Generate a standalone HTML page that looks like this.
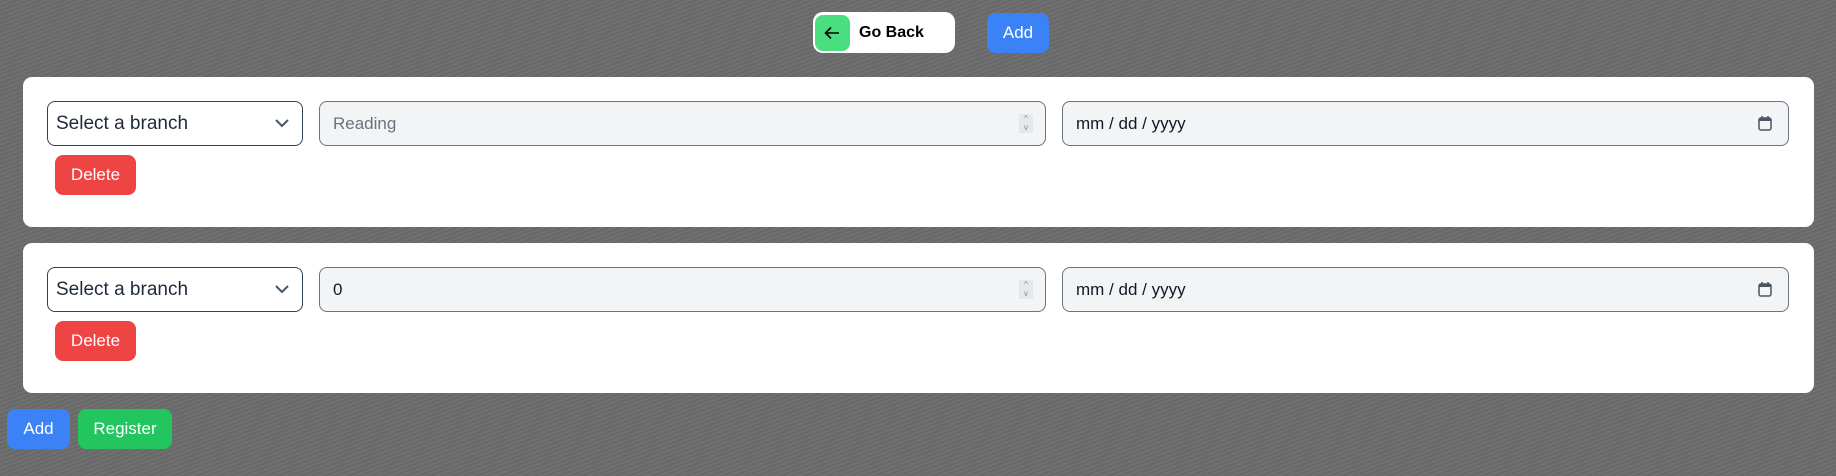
<!DOCTYPE html>
<html><head><style>
*{box-sizing:border-box;margin:0;padding:0}
body{width:1836px;height:476px;overflow:hidden;font-family:"Liberation Sans",sans-serif;
background:#6c6c6c;
background-image:repeating-linear-gradient(160deg,rgba(255,255,255,.035) 0 1px,rgba(0,0,0,.04) 1px 3px,rgba(255,255,255,.02) 3px 4px);
position:relative}
.abs{position:absolute}
.btn{position:absolute;color:#fff;border-radius:8px;font-size:17px;display:flex;align-items:center;justify-content:center}
.card{position:absolute;left:23px;width:1791px;height:150px;background:#fff;border-radius:9px}
.sel{position:absolute;left:24px;top:24px;width:256px;height:45px;border:1.5px solid #334155;border-radius:8px;font-size:19px;color:#1e293b;padding-left:8px;display:flex;align-items:center}
.inp{position:absolute;top:24px;height:45px;background:#f3f4f6;border:1.5px solid #6b7280;border-radius:8px;font-size:17px;display:flex;align-items:center;padding-left:13px}
.del{left:32px;top:78px;width:81px;height:40px;background:#ef4444}
</style></head><body>
<div class="abs" style="left:813px;top:12px;width:142px;height:41px;background:#fff;border-radius:10px">
 <div class="abs" style="left:2px;top:3px;width:35px;height:36px;background:#4ade80;border-radius:8px">
  <svg width="35" height="36" viewBox="0 0 35 36"><path d="M24 18H11M16 12.5L10.5 18L16 23.5" stroke="#000" stroke-width="1.6" fill="none"/></svg>
 </div>
 <div class="abs" style="left:46px;top:12px;font-weight:bold;font-size:16px;color:#000">Go Back</div>
</div>
<div class="btn" style="left:987px;top:13px;width:62px;height:40px;background:#3b82f6">Add</div>

<div class="card" style="top:77px">
 <div class="sel">Select a branch<svg class="abs" style="right:12px;top:15px" width="16" height="12" viewBox="0 0 16 12"><path d="M2 3l6 6 6-6" stroke="#475569" stroke-width="2" fill="none"/></svg></div>
 <div class="inp" style="left:296px;width:727px;color:#6b7280">Reading<div class="abs" style="right:12px;top:12px;width:14px;height:19px;background:#e5e7eb;font-size:8px;color:#888;text-align:center;line-height:9px">^<br>v</div></div>
 <div class="inp" style="left:1039px;width:727px;color:#111827">mm / dd / yyyy<svg class="abs" style="right:16px;top:13px" width="14" height="16" viewBox="0 0 14 16"><rect x="1" y="3" width="12" height="12" rx="2" fill="none" stroke="#4b5563" stroke-width="1.5"/><rect x="1" y="3" width="12" height="3" fill="#4b5563"/><path d="M4 1v3M10 1v3" stroke="#4b5563" stroke-width="1.5"/></svg></div>
 <div class="btn del">Delete</div>
</div>

<div class="card" style="top:243px">
 <div class="sel">Select a branch<svg class="abs" style="right:12px;top:15px" width="16" height="12" viewBox="0 0 16 12"><path d="M2 3l6 6 6-6" stroke="#475569" stroke-width="2" fill="none"/></svg></div>
 <div class="inp" style="left:296px;width:727px;color:#111827">0<div class="abs" style="right:12px;top:12px;width:14px;height:19px;background:#e5e7eb;font-size:8px;color:#888;text-align:center;line-height:9px">^<br>v</div></div>
 <div class="inp" style="left:1039px;width:727px;color:#111827">mm / dd / yyyy<svg class="abs" style="right:16px;top:13px" width="14" height="16" viewBox="0 0 14 16"><rect x="1" y="3" width="12" height="12" rx="2" fill="none" stroke="#4b5563" stroke-width="1.5"/><rect x="1" y="3" width="12" height="3" fill="#4b5563"/><path d="M4 1v3M10 1v3" stroke="#4b5563" stroke-width="1.5"/></svg></div>
 <div class="btn del">Delete</div>
</div>

<div class="btn" style="left:7px;top:409px;width:63px;height:40px;background:#3b82f6">Add</div>
<div class="btn" style="left:78px;top:409px;width:94px;height:40px;background:#22c55e">Register</div>
</body></html>
